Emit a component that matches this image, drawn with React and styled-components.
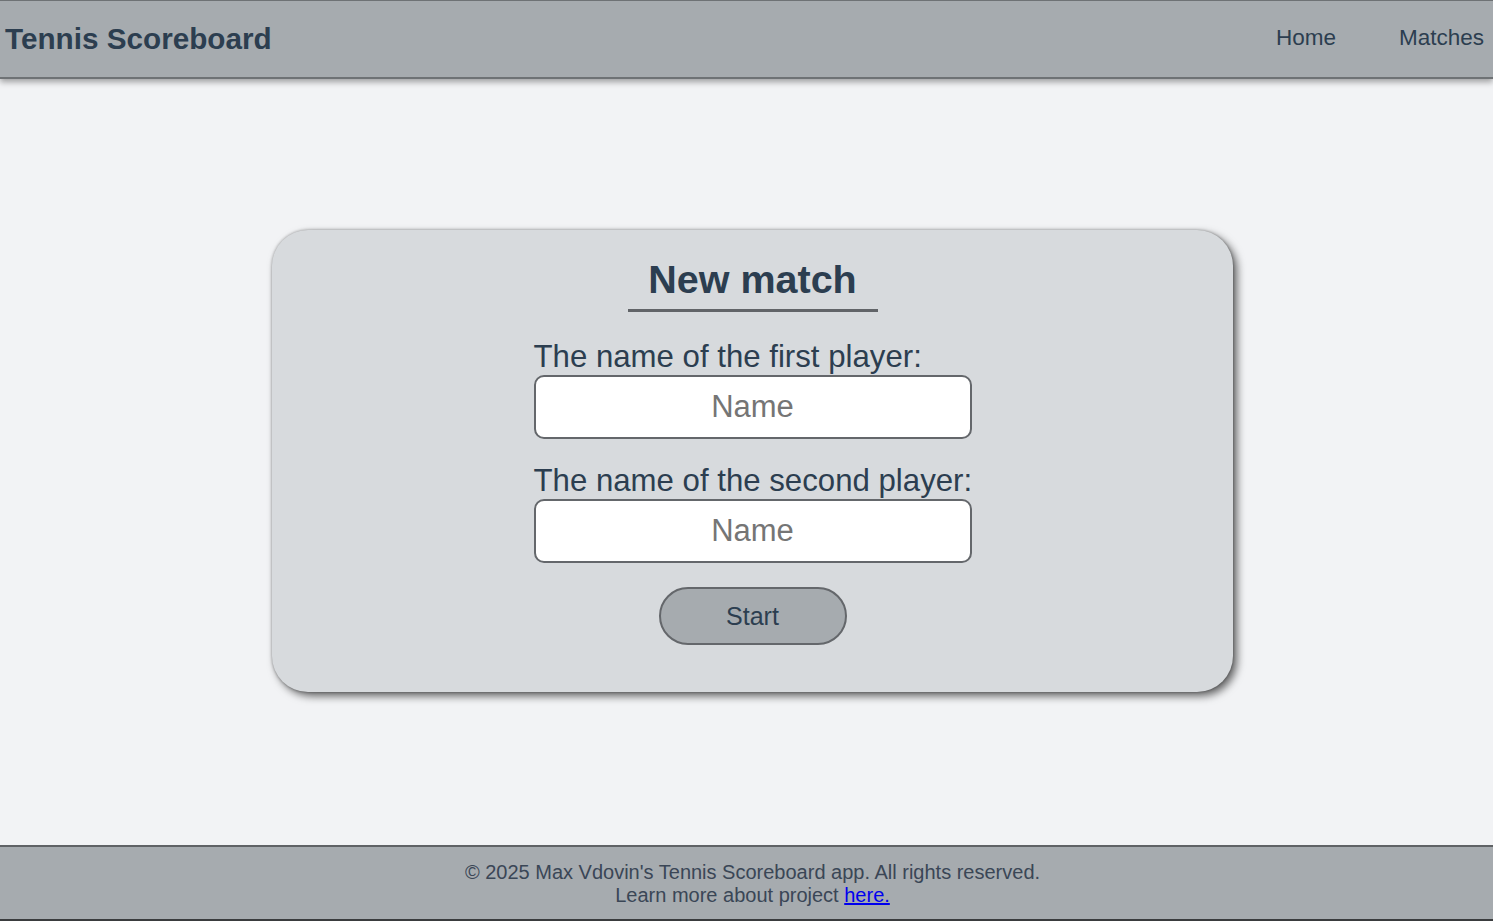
import React from "react";
import styled, { createGlobalStyle } from "styled-components";

const GlobalStyle = createGlobalStyle`
  html, body {
    margin: 0;
    padding: 0;
  }
  body {
    background: #f2f3f5;
    font-family: "Liberation Sans", Arial, sans-serif;
    color: #2c3e50;
  }
`;

const Page = styled.div`
  display: flex;
  flex-direction: column;
  min-height: 100vh;
`;

const Header = styled.header`
  height: 76px;
  display: flex;
  align-items: center;
  justify-content: space-between;
  padding: 0 9px 0 5px;
  background: #a6abaf;
  border-top: 1px solid #6e7275;
  border-bottom: 2px solid #6e7275;
  box-shadow: 0 3px 6px rgba(0, 0, 0, 0.35);
  position: relative;
  z-index: 1;
`;

const Brand = styled.div`
  font-size: 29.7px;
  font-weight: bold;
  color: #2c3e50;
`;

const Nav = styled.nav`
  display: flex;
  gap: 63px;
  padding-bottom: 2px;

  a {
    font-size: 22.5px;
    color: #2c3e50;
    text-decoration: none;
  }
`;

const Main = styled.main`
  flex: 1;
  display: flex;
  align-items: center;
  justify-content: center;
  padding: 0 0 2px 12px;
`;

const Card = styled.div`
  width: 961px;
  height: 462px;
  box-sizing: border-box;
  background: #d7dadd;
  border-radius: 36px;
  box-shadow: 4px 4px 8px rgba(0, 0, 0, 0.6), 0 0 3px rgba(0, 0, 0, 0.35);
  display: flex;
  flex-direction: column;
  align-items: center;
  padding-top: 27px;
`;

const Title = styled.h1`
  margin: 0 0 26px;
  font-size: 39.5px;
  font-weight: bold;
  width: 250px;
  text-align: center;
  padding-bottom: 8px;
  border-bottom: 3px solid #616468;
  line-height: 44px;
`;

const Form = styled.form`
  display: flex;
  flex-direction: column;
  align-items: center;
`;

const Field = styled.div`
  display: flex;
  flex-direction: column;
  width: 438px;
  margin-bottom: ${(p) => p.$gap}px;
`;

const Label = styled.label`
  font-size: 31.2px;
  line-height: 37px;
  color: #2c3e50;
  white-space: nowrap;
`;

const Input = styled.input`
  box-sizing: border-box;
  width: 438px;
  height: 64px;
  border: 2px solid #64676b;
  border-radius: 10px;
  background: #fff;
  font-family: "Liberation Sans", Arial, sans-serif;
  font-size: 31px;
  text-align: center;
  color: #2c3e50;
  outline: none;

  &::placeholder {
    color: #757575;
  }
`;

const Button = styled.button`
  box-sizing: border-box;
  width: 188px;
  height: 58px;
  border-radius: 29px;
  border: 2px solid #64676b;
  background: #a6abaf;
  font-family: "Liberation Sans", Arial, sans-serif;
  font-size: 25px;
  color: #2c3e50;
  cursor: pointer;
`;

const Footer = styled.footer`
  height: 71px;
  box-sizing: content-box;
  background: #a6abaf;
  border-top: 2px solid #5f6265;
  border-bottom: 2px solid #3a3c3e;
  display: flex;
  flex-direction: column;
  align-items: center;
  justify-content: center;
  font-size: 20px;
  line-height: 23px;
  color: #3a4656;
  padding-left: 12px;
  padding-top: 1px;

  a {
    color: #0000ee;
  }
`;

export default function App() {
  return (
    <>
      <GlobalStyle />
      <Page>
        <Header>
          <Brand>Tennis Scoreboard</Brand>
          <Nav>
            <a href="#">Home</a>
            <a href="#">Matches</a>
          </Nav>
        </Header>
        <Main>
          <Card>
            <Title>New match</Title>
            <Form onSubmit={(e) => e.preventDefault()}>
              <Field $gap={23}>
                <Label htmlFor="p1">The name of the first player:</Label>
                <Input id="p1" placeholder="Name" />
              </Field>
              <Field $gap={24}>
                <Label htmlFor="p2">The name of the second player:</Label>
                <Input id="p2" placeholder="Name" />
              </Field>
              <Button type="submit">Start</Button>
            </Form>
          </Card>
        </Main>
        <Footer>
          <div>© 2025 Max Vdovin's Tennis Scoreboard app. All rights reserved.</div>
          <div>
            Learn more about project <a href="#">here.</a>
          </div>
        </Footer>
      </Page>
    </>
  );
}
